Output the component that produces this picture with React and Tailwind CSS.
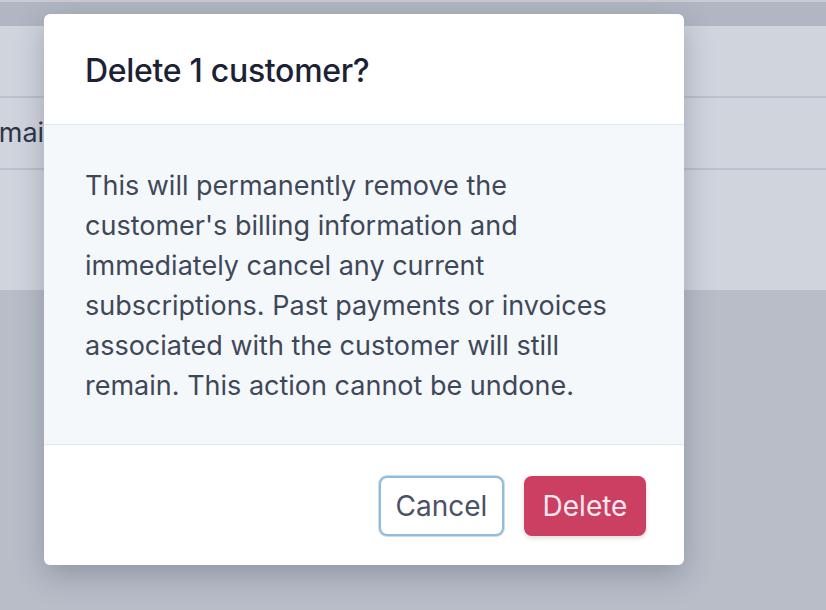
import React from 'react';

// Arka plan tablo satırları (modal altında kalan kısım)
function BackgroundTable() {
  return (
    <div className="flex flex-col">
      <div className="h-[2px] bg-[#c8ccd4]" />
      <div className="h-[24px] bg-[#b0b6c2]" />
      <div className="bg-[#d0d4dd]">
        <div className="h-[72px] border-b-2 border-[#bcc1cb]" />
        <div className="h-[72px] border-b-2 border-[#bcc1cb] flex items-center">
          <span className="text-[27px] text-[#2d3546] ml-[-17px]">email</span>
        </div>
        <div className="h-[120px]" />
      </div>
      <div className="h-[320px] bg-[#b8bdc8]" />
    </div>
  );
}

export default function App() {
  return (
    <div
      className="relative w-[826px] h-[610px] overflow-hidden"
      style={{ fontFamily: 'Inter, "Noto Sans", sans-serif' }}
    >
      <BackgroundTable />

      {/* Silme onay modalı */}
      <div className="absolute left-[44px] top-[14px] w-[640px] bg-white rounded-[6px] shadow-[0_10px_30px_rgba(40,50,70,0.28)] overflow-hidden">
        <div className="h-[111px] flex items-center px-[41px] pt-[4px] border-b border-[#e2e8f0]">
          <h2 className="text-[32px] font-medium text-[#1c2235] tracking-[-0.3px]">Delete 1 customer?</h2>
        </div>

        <div className="bg-[#f5f8fb] px-[41px] pt-[41px] pb-[38px] border-b border-[#e2e8f0]">
          <p className="text-[27px] leading-[40px] text-[#3f4859]">
            This will permanently remove the<br />
            customer's billing information and<br />
            immediately cancel any current<br />
            subscriptions. Past payments or invoices<br />
            associated with the customer will still<br />
            remain. This action cannot be undone.
          </p>
        </div>

        <div className="h-[120px] flex items-center justify-end gap-[20px] pr-[38px] pt-[2px]">
          <button className="w-[125px] h-[60px] rounded-[8px] bg-white border-2 border-[#93bcd8] shadow-[0_0_0_1px_rgba(150,190,220,0.5)] text-[28px] text-[#4a5266]">
            Cancel
          </button>
          <button className="w-[122px] h-[60px] rounded-[8px] bg-[#cb3f63] shadow-[0_2px_5px_rgba(0,0,0,0.15)] text-[28px] text-[#fde9ee]">
            Delete
          </button>
        </div>
      </div>
    </div>
  );
}
